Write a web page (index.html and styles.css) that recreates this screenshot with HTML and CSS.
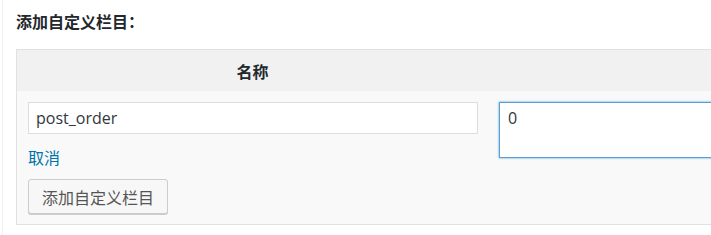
FILE: index.html
```html
<!DOCTYPE html>
<html lang="zh-CN">
<head>
    <meta charset="UTF-8">
    <title>添加自定义栏目</title>
    <link rel="stylesheet" href="styles.css">
</head>
<body>
    <div class="wrap">
        <h3 class="title">添加自定义栏目：</h3>
        <table class="meta-table">
            <thead>
                <tr>
                    <th class="col-key">名称</th>
                    <th class="col-value"></th>
                </tr>
            </thead>
            <tbody>
                <tr>
                    <td class="col-key">
                        <input type="text" class="meta-key" value="post_order">
                        <a href="#" class="cancel">取消</a>
                        <button type="button" class="button">添加自定义栏目</button>
                    </td>
                    <td class="col-value">
                        <textarea class="meta-value" rows="2">0</textarea>
                    </td>
                </tr>
            </tbody>
        </table>
    </div>
</body>
</html>
```

FILE: styles.css
```css
html, body {
    margin: 0;
    padding: 0;
    background: #fff;
    overflow: hidden;
}
body {
    font-family: "Open Sans", "Noto Sans CJK SC", sans-serif;
    font-size: 16px;
    color: #32373c;
    padding-left: 2px;
}
.wrap {
    border-left: 1px solid #f0f0f0;
    padding: 0 0 0 13px;
    height: 235px;
}
.title {
    margin: 0;
    padding-top: 11px;
    height: 38px;
    font-size: 16px;
    font-weight: bold;
    color: #23282d;
    line-height: 22px;
}
.meta-table {
    width: 900px;
    border-collapse: collapse;
    border: 1px solid #e1e1e1;
}
.meta-table th {
    background: #f1f1f1;
    height: 41px;
    padding: 0;
    font-size: 16px;
    font-weight: bold;
    color: #23282d;
    text-align: center;
}
.meta-table td {
    background: #f9f9f9;
    padding: 11px 10px 10px 11px;
    vertical-align: top;
}
.col-key {
    width: 450px;
}
.meta-key {
    display: block;
    box-sizing: border-box;
    width: 450px;
    height: 32px;
    margin: 0;
    padding: 0 7px;
    border: 1px solid #ddd;
    background: #fff;
    font-family: inherit;
    font-size: 16px;
    color: #32373c;
}
.cancel {
    display: block;
    margin-top: 13px;
    color: #0073aa;
    text-decoration: none;
    font-size: 16px;
    line-height: 22px;
}
.button {
    display: block;
    margin-top: 10px;
    height: 35px;
    padding: 0 13px;
    border: 1px solid #ccc;
    border-radius: 3px;
    background: #f7f7f7;
    box-shadow: 0 1px 0 #ccc;
    font-family: inherit;
    font-size: 16px;
    color: #555;
    cursor: pointer;
}
.meta-value {
    display: block;
    box-sizing: border-box;
    width: 400px;
    height: 56px;
    margin: 0;
    padding: 4px 8px;
    border: 1px solid #5b9dd9;
    box-shadow: 0 0 2px rgba(30, 140, 190, 0.8);
    background: #fff;
    resize: none;
    font-family: inherit;
    font-size: 16px;
    color: #32373c;
    outline: none;
}
```
